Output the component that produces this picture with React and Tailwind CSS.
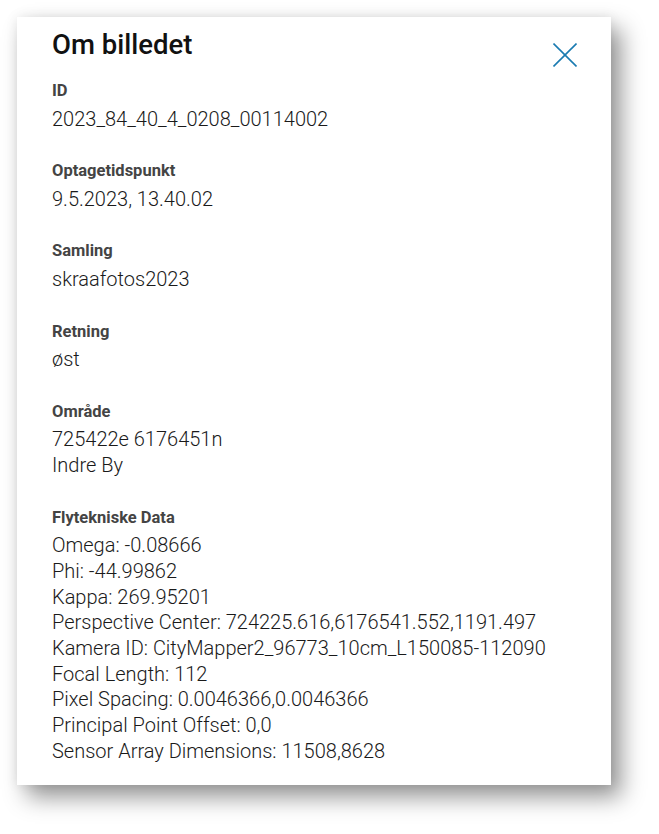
export default function App() {
  const sections = [
    { label: "ID", lines: ["2023_84_40_4_0208_00114002"] },
    { label: "Optagetidspunkt", lines: ["9.5.2023, 13.40.02"] },
    { label: "Samling", lines: ["skraafotos2023"] },
    { label: "Retning", lines: ["øst"] },
    { label: "Område", lines: ["725422e 6176451n", "Indre By"] },
    {
      label: "Flytekniske Data",
      lines: [
        "Omega: -0.08666",
        "Phi: -44.99862",
        "Kappa: 269.95201",
        "Perspective Center: 724225.616,6176541.552,1191.497",
        "Kamera ID: CityMapper2_96773_10cm_L150085-112090",
        "Focal Length: 112",
        "Pixel Spacing: 0.0046366,0.0046366",
        "Principal Point Offset: 0,0",
        "Sensor Array Dimensions: 11508,8628",
      ],
    },
  ];
  return (
    <div className="min-h-[834px] w-[659px] bg-white pt-[17px] pl-[17px]" style={{ fontFamily: "Roboto, 'Liberation Sans', sans-serif" }}>
      <div className="w-[594px] h-[768px] bg-white shadow-[10px_12px_22px_rgba(0,0,0,0.42),0_0_12px_rgba(0,0,0,0.08)] pl-[35px] pr-[34px] pt-[12px]">
        <div className="flex justify-between items-start">
          <h1 className="text-[27.5px] leading-[32px] font-medium text-[#111]">Om billedet</h1>
          <button className="mt-[14px] w-[24px] h-[24px]">
            <svg width="24" height="24" viewBox="0 0 24 24" fill="none" stroke="#1a7bb1" strokeWidth="1.6">
              <line x1="0.5" y1="0.5" x2="23.5" y2="23.5" />
              <line x1="23.5" y1="0.5" x2="0.5" y2="23.5" />
            </svg>
          </button>
        </div>
        <div className="mt-[12px] flex flex-col gap-[27px]">
          {sections.map((s) => (
            <div key={s.label}>
              <div className="text-[16.5px] leading-[24px] font-bold text-[#444]">{s.label}</div>
              <div className="mt-[3.5px]">
                {s.lines.map((l) => (
                  <div key={l} className="text-[20px] leading-[25.7px] font-light text-[#1a1a1a] whitespace-nowrap">{l}</div>
                ))}
              </div>
            </div>
          ))}
        </div>
      </div>
    </div>
  );
}
